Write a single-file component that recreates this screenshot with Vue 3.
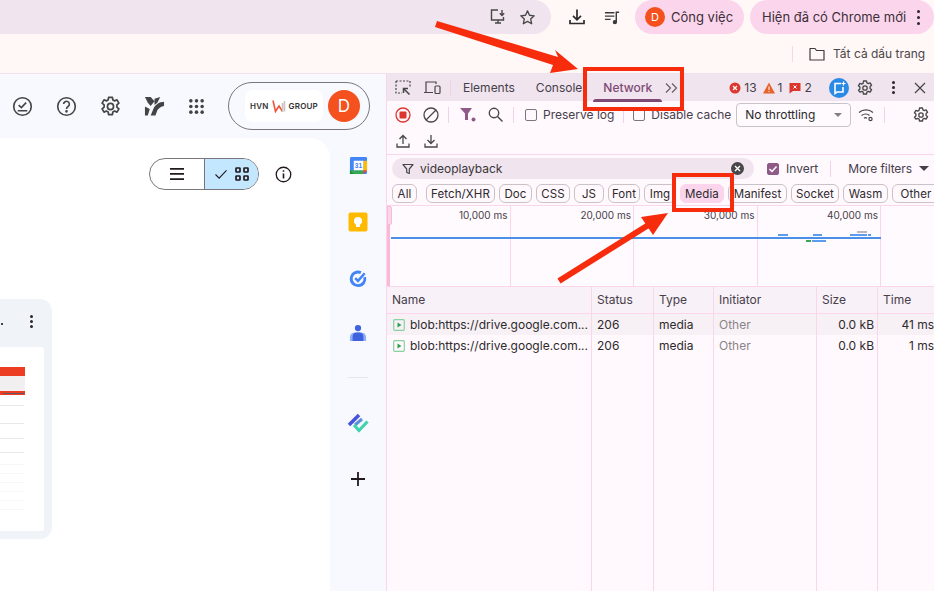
<script setup>
const chips = [
  { label: 'All', w: 25 },
  { label: 'Fetch/XHR', w: 69 },
  { label: 'Doc', w: 33 },
  { label: 'CSS', w: 34 },
  { label: 'JS', w: 30 },
  { label: 'Font', w: 32 },
  { label: 'Img', w: 32 },
  { label: 'Media', w: 44, active: true },
  { label: 'Manifest', w: 59 },
  { label: 'Socket', w: 48 },
  { label: 'Wasm', w: 45 },
  { label: 'Other', w: 48 }
];

const ticks = ['10,000 ms', '20,000 ms', '30,000 ms', '40,000 ms'];

const bars = [
  { x: 778, y: 234, w: 10, c: '#5b9bf0' },
  { x: 813, y: 234, w: 9, c: '#5b9bf0' },
  { x: 850, y: 234, w: 8, c: '#5b9bf0' },
  { x: 858, y: 234, w: 9, c: '#5b9bf0' },
  { x: 868, y: 234, w: 3, c: '#5b9bf0' },
  { x: 857, y: 231, w: 10, c: '#bdb6bd' },
  { x: 806, y: 240, w: 5, c: '#3aa457' },
  { x: 812, y: 240, w: 5, c: '#5b9bf0' },
  { x: 817, y: 240, w: 9, c: '#5b9bf0' }
];

const rows = [
  { time: '41 ms', stripe: true },
  { time: '1 ms', stripe: false }
];
</script>

<template>
  <div class="page">
    <div class="topbar">
      <div class="omnibox">
        <svg class="ico install" viewBox="0 0 18 18" width="18" height="18" fill="none" stroke="#474747" stroke-width="1.4">
          <path d="M9 2H2.500v10h12V9" />
          <path d="M6 15h6M9 12v3" />
          <path d="M13 2v5M10.800 5.200 13 7.400l2.200-2.200" />
        </svg>
        <svg class="ico" viewBox="0 0 18 18" width="17" height="17" fill="none" stroke="#474747" stroke-width="1.4">
          <path d="m9 2 2.100 4.600 5 .6-3.700 3.400 1 5L9 13.100l-4.400 2.500 1-5L1.900 7.200l5-.6z" stroke-linejoin="round" />
        </svg>
      </div>
      <svg class="ico download" viewBox="0 0 18 18" width="18" height="18" fill="none" stroke="#2b2b2b" stroke-width="1.7">
        <path d="M9 1.500v10M5 7.800l4 4 4-4M2 12v3.500h14V12" />
      </svg>
      <svg class="ico media" viewBox="0 0 18 18" width="17" height="17" fill="none" stroke="#3a3a3a" stroke-width="1.5">
        <path d="M1 4h10M1 7.500h10M1 11h6" />
        <path d="M13 14V3.500h3" />
        <circle cx="11.500" cy="14" r="1.500" fill="#3a3a3a" />
      </svg>
      <div class="pill work">
        <span class="mini-avatar">D</span>
        <span>Công việc</span>
      </div>
      <div class="pill update">
        <span>Hiện đã có Chrome mới</span>
        <i class="dots"><b></b><b></b><b></b></i>
      </div>
    </div>

    <div class="bookmarks">
      <span class="bm-sep"></span>
      <svg viewBox="0 0 16 14" width="16" height="14" fill="none" stroke="#3d3d3d" stroke-width="1.2">
        <path d="M1 1.500h5l1.500 2H15v9.500H1z" stroke-linejoin="round" />
      </svg>
      <span>Tất cả dấu trang</span>
    </div>

    <div class="main">
      <div class="app">
        <div class="app-head">
          <svg class="hico" viewBox="0 0 22 22" width="21" height="21" fill="none" stroke="#444" stroke-width="1.700">
            <circle cx="11" cy="11" r="9.200" />
            <path d="m7 9.500 2.800 2.600 5-5.200M6 15.500h10" />
          </svg>
          <svg class="hico" viewBox="0 0 22 22" width="21" height="21" fill="none" stroke="#444" stroke-width="1.700">
            <circle cx="11" cy="11" r="9.200" />
            <path d="M8 8.500a3 3 0 1 1 4.700 2.500c-1 .7-1.700 1.200-1.700 2.500" />
            <circle cx="11" cy="16" r=".6" fill="#444" />
          </svg>
          <svg class="hico" viewBox="0 0 22 22" width="21" height="21" fill="none" stroke="#444" stroke-width="1.800">
            <path d="m9 1.500h4l.5 2.700 1.800.9 2.500-1.100 2 3.400-2.100 1.800v2.500l2.100 1.800-2 3.400-2.500-1.100-1.800.9-.5 2.700H9l-.5-2.700-1.800-.9-2.500 1.100-2-3.400 2.100-1.800V9.200L2.200 7.400l2-3.400 2.500 1.100 1.800-.9z" stroke-linejoin="round" />
            <circle cx="11" cy="11" r="3.200" />
          </svg>
          <svg class="hico" viewBox="0 0 22 22" width="21" height="21" fill="#444">
            <path d="M1 1h6l4 4.500-4 5L4 7zM11 3l6-2-3 6-3 2.500zM21 6c-5 0-9 3-11 7l-3 7.500h5l2-5.500c1.500-2.500 4-4 7-4.500zM1 11l5 2.500-2 7H1z" />
          </svg>
          <svg class="hico" viewBox="0 0 18 18" width="17" height="17" fill="#444">
            <circle cx="3" cy="3" r="1.900" /><circle cx="9" cy="3" r="1.900" /><circle cx="15" cy="3" r="1.900" />
            <circle cx="3" cy="9" r="1.900" /><circle cx="9" cy="9" r="1.900" /><circle cx="15" cy="9" r="1.900" />
            <circle cx="3" cy="15" r="1.900" /><circle cx="9" cy="15" r="1.900" /><circle cx="15" cy="15" r="1.900" />
          </svg>
          <div class="account">
            <div class="org">
              <span>HVN</span>
              <svg viewBox="0 0 14 14" width="14" height="14" fill="none" stroke-width="1.600">
                <path d="M1 1.500 3.500 12.500 7 7l3.500 5.500" stroke="#f0523a" />
                <path d="M10.500 12.500V4M12.500 12.500V2" stroke="#c9c3c3" />
              </svg>
              <span>GROUP</span>
            </div>
            <span class="avatar">D</span>
          </div>
        </div>

        <div class="app-body">
          <div class="sheet">
            <div class="sheet-tools">
              <div class="toggle">
                <div class="seg">
                  <svg viewBox="0 0 14 12" width="14" height="12" fill="#22191f"><path d="M0 0h14v1.700H0zM0 5.100h14v1.700H0zM0 10.200h14v1.700H0z" /></svg>
                </div>
                <div class="seg on">
                  <svg viewBox="0 0 14 12" width="14" height="11" fill="none" stroke="#22191f" stroke-width="1.200"><path d="m1 6 4 4 8-8.500" /></svg>
                  <svg viewBox="0 0 14 14" width="14" height="14" fill="none" stroke="#22191f" stroke-width="1.700">
                    <rect x="1" y="1" width="4" height="4" rx=".6" /><rect x="9" y="1" width="4" height="4" rx=".6" />
                    <rect x="1" y="9" width="4" height="4" rx=".6" /><rect x="9" y="9" width="4" height="4" rx=".6" />
                  </svg>
                </div>
              </div>
              <svg viewBox="0 0 18 18" width="17" height="17" fill="none" stroke="#22191f" stroke-width="1.400">
                <circle cx="9" cy="9" r="7.700" />
                <path d="M9 8v5.200M9 4.500v1.700" stroke-width="1.700" />
              </svg>
            </div>

            <div class="file-card">
              <div class="file-head">
                <i class="stop"></i>
                <i class="dots small"><b></b><b></b><b></b></i>
              </div>
              <svg class="thumb" viewBox="0 0 44 184" width="44" height="184">
                <rect width="44" height="184" fill="#fff" />
                <rect x="0" y="20" width="25" height="9" fill="#ec3c22" />
                <rect x="0" y="29" width="25" height="15" fill="#f1eff0" />
                <rect x="0" y="44" width="25" height="4" fill="#ec3c22" />
                <rect x="3" y="46" width="21" height="1" fill="#6b5360" />
                <rect x="0" y="58" width="24" height="1" fill="#ebe8e9" />
                <rect x="0" y="76" width="24" height="1" fill="#ebe8e9" />
                <rect x="0" y="91" width="24" height="1" fill="#ebe8e9" />
                <rect x="0" y="105" width="24" height="1" fill="#ebe8e9" />
                <rect x="0" y="117" width="24" height="1" fill="#f8f6f7" />
                <rect x="0" y="126" width="24" height="1" fill="#f8f6f7" />
                <rect x="0" y="135" width="24" height="1" fill="#f8f6f7" />
                <rect x="0" y="144" width="24" height="1" fill="#f8f6f7" />
                <rect x="0" y="153" width="24" height="1" fill="#f8f6f7" />
                <rect x="0" y="162" width="24" height="1" fill="#f8f6f7" />
              </svg>
            </div>
          </div>

          <div class="rail">
            <svg viewBox="0 0 20 20" width="19" height="19">
              <rect x="1" y="1" width="18" height="18" rx="1.500" fill="#4285f4" />
              <rect x="1" y="15" width="14" height="4" fill="#34a853" />
              <rect x="15" y="5" width="4" height="11" fill="#fbbc04" />
              <path d="M1 15v4h4z" fill="#1e8e3e" />
              <path d="M15 19l4-4h-4z" fill="#ea4335" />
              <rect x="5" y="5" width="10" height="10" fill="#fff" />
              <text x="10" y="13" class="cal">31</text>
            </svg>
            <svg viewBox="0 0 20 20" width="20" height="20">
              <rect x="0.500" y=".5" width="19" height="19" rx="2" fill="#ffba00" />
              <circle cx="10" cy="9" r="4" fill="#fff" />
              <rect x="8" y="12.500" width="4" height="2.500" fill="#fff" />
            </svg>
            <svg viewBox="0 0 20 20" width="19" height="19" fill="none" stroke="#4285f4" stroke-width="3">
              <path d="M16.500 8.500a7.200 7.200 0 1 1-4-4.700" />
              <path d="m6.500 9.500 3 3 7-8" stroke-width="2.600" />
            </svg>
            <svg viewBox="0 0 20 20" width="18" height="18">
              <path d="M1 19v-4.500A5.500 5.500 0 0 1 6 9.500h8a5.500 5.500 0 0 1 5 5V19z" fill="#8fb0f2" />
              <circle cx="10" cy="4.500" r="3.500" fill="#3f62e0" />
              <path d="M4 19v-5A4.500 4.500 0 0 1 8 9.500h4a4.500 4.500 0 0 1 4 4.500v5z" fill="#3f62e0" />
            </svg>
            <span class="rail-sep"></span>
            <svg viewBox="0 0 22 20" width="22" height="20" fill="none">
              <path d="M2 12 12 2" stroke="#4654dd" stroke-width="3.500" />
              <path d="M8 12 15 6" stroke="#5a90d8" stroke-width="3" />
              <path d="m7 12 5 5.500 8.500-9" stroke="#3fd3ae" stroke-width="3.200" />
            </svg>
            <svg class="plus" viewBox="0 0 14 14" width="14" height="14" fill="none" stroke="#22191f" stroke-width="1.800">
              <path d="M7 0v14M0 7h14" />
            </svg>
          </div>
        </div>
      </div>

      <div class="devtools">
        <div class="tabs">
          <svg class="tool first" viewBox="0 0 16 16" width="16" height="16" fill="none" stroke="#474747" stroke-width="1.200">
            <path d="M1 1h14v6M1 1v12h6" stroke-dasharray="2 1.500" />
            <path d="M14.500 14.500 8.500 8.500M8.500 13V8.500H13" stroke-width="1.500" />
          </svg>
          <svg class="tool second" viewBox="0 0 18 16" width="18" height="16" fill="none" stroke="#474747" stroke-width="1.200">
            <path d="M1 12.500h9M3 12V2h10v2" />
            <rect x="12" y="6" width="5" height="7.500" rx="1" />
          </svg>
          <span class="v-sep"></span>
          <span class="tab elements">Elements</span>
          <span class="tab console">Console</span>
          <span class="tab active">Network</span>
          <svg class="more" viewBox="0 0 13 10" width="13" height="10" fill="none" stroke="#5f5a60" stroke-width="1.100">
            <path d="m1 .5 4.500 4.500L1 9.500M7 .5 11.500 5 7 9.500" />
          </svg>
          <div class="status">
            <svg viewBox="0 0 12 12" width="12" height="12"><circle cx="6" cy="6" r="5.500" fill="#dc362e" /><path d="m4 4 4 4M8 4 4 8" stroke="#fff" stroke-width="1.200" /></svg>
            <span>13</span>
            <svg class="s-gap" viewBox="0 0 12 12" width="12" height="12"><path d="M6 .5 12 11.500H0z" fill="#e8622c" /><path d="M6 4.500V8M6 9v1" stroke="#fff" stroke-width="1" /></svg>
            <span>1</span>
            <svg class="s-gap2" viewBox="0 0 12 12" width="12" height="12"><path d="M.5 1h11v8H4l-3.500 2.500z" fill="#dc362e" /><path d="m4.500 3.500 3 3M7.500 3.500l-3 3" stroke="#fff" stroke-width="1" /></svg>
            <span>2</span>
          </div>
          <span class="ai">
            <svg viewBox="0 0 20 20" width="20" height="20"><circle cx="10" cy="10" r="10" fill="#2b8ae6" /><path d="M12 5.500H6v10l2-1.500h6v-5" fill="none" stroke="#fff" stroke-width="1.600" /><path d="M14.500 3.500v4M12.500 5.500h4" stroke="#fff" stroke-width="1.200" /></svg>
          </span>
          <svg class="gear g1" viewBox="0 0 16 16" width="16" height="16" fill="none" stroke="#474747" stroke-width="1.300">
            <path d="M6.500 1h3l.4 1.900 1.400.7 1.800-.8 1.500 2.500-1.500 1.300v1.800l1.500 1.300-1.500 2.500-1.800-.8-1.400.7-.4 1.900h-3l-.4-1.900-1.400-.7-1.800.8L1.400 10.200l1.500-1.300V7.100L1.400 5.800l1.500-2.500 1.800.8 1.400-.7z" stroke-linejoin="round" />
            <circle cx="8" cy="8" r="2.200" />
          </svg>
          <i class="dots small kebab"><b></b><b></b><b></b></i>
          <svg class="close" viewBox="0 0 12 12" width="12" height="12" fill="none" stroke="#474747" stroke-width="1.300">
            <path d="m1 1 10 10M11 1 1 11" />
          </svg>
        </div>

        <div class="bar">
          <svg class="tool first" viewBox="0 0 16 16" width="16" height="16" fill="none">
            <circle cx="8" cy="8" r="7" stroke="#dc362e" stroke-width="1.300" />
            <rect x="4.500" y="4.500" width="7" height="7" rx="1" fill="#dc362e" />
          </svg>
          <svg class="tool second" viewBox="0 0 16 16" width="16" height="16" fill="none" stroke="#474747" stroke-width="1.300">
            <circle cx="8" cy="8" r="7" />
            <path d="m3 13 10-10" />
          </svg>
          <span class="v-sep"></span>
          <svg class="funnel" viewBox="0 0 16 14" width="16" height="14" fill="#8f5a87">
            <path d="M0 0h12L8 5.500V12H5V5.500z" />
            <circle cx="13.500" cy="11.500" r="2" />
          </svg>
          <svg class="glass" viewBox="0 0 15 15" width="15" height="15" fill="none" stroke="#474747" stroke-width="1.400">
            <circle cx="6" cy="6" r="4.700" />
            <path d="m9.500 9.500 5 5" />
          </svg>
          <span class="v-sep s2"></span>
          <label class="check c1"><i class="box"></i>Preserve log</label>
          <span class="v-sep s3"></span>
          <label class="check c2"><i class="box"></i>Disable cache</label>
          <div class="select">
            <span>No throttling</span>
            <i class="caret"></i>
          </div>
          <svg class="wifi" viewBox="0 0 16 14" width="16" height="14" fill="none" stroke="#474747" stroke-width="1.200">
            <path d="M1 4.500c4-3.500 10-3.500 14 0M3.500 7.500c2.500-2 6-2 8 0M6 10.200c1-.8 2-.8 3 0" />
            <circle cx="12.500" cy="11" r="1.600" />
          </svg>
          <span class="v-sep s4"></span>
          <svg class="gear g2" viewBox="0 0 16 16" width="16" height="16" fill="none" stroke="#474747" stroke-width="1.300">
            <path d="M6.500 1h3l.4 1.900 1.400.7 1.800-.8 1.500 2.500-1.500 1.300v1.800l1.500 1.300-1.500 2.500-1.800-.8-1.400.7-.4 1.900h-3l-.4-1.900-1.400-.7-1.800.8L1.400 10.200l1.500-1.300V7.100L1.400 5.800l1.500-2.500 1.800.8 1.400-.7z" stroke-linejoin="round" />
            <circle cx="8" cy="8" r="2.200" />
          </svg>
        </div>

        <div class="bar second-bar">
          <svg class="tool first" viewBox="0 0 14 14" width="14" height="14" fill="none" stroke="#474747" stroke-width="1.300">
            <path d="M7 10V1.500M3.500 5 7 1.500 10.500 5M1 9.500v3.500h12V9.500" />
          </svg>
          <svg class="tool second" viewBox="0 0 14 14" width="14" height="14" fill="none" stroke="#474747" stroke-width="1.300">
            <path d="M7 1v8.500M3.500 6 7 9.500 10.500 6M1 9.500v3.500h12V9.500" />
          </svg>
        </div>

        <div class="filter-row">
          <div class="search">
            <svg viewBox="0 0 12 12" width="12" height="12" fill="none" stroke="#474747" stroke-width="1.200">
              <path d="M1 1.500h10L7.300 6v4.500L4.700 9.500V6z" stroke-linejoin="round" />
            </svg>
            <span>videoplayback</span>
            <svg class="clear" viewBox="0 0 13 13" width="13" height="13">
              <circle cx="6.500" cy="6.500" r="6.500" fill="#474747" />
              <path d="m4 4 5 5M9 4 4 9" stroke="#fff" stroke-width="1.400" />
            </svg>
          </div>
          <label class="check invert">
            <i class="box on">
              <svg viewBox="0 0 12 12" width="12" height="12" fill="none" stroke="#fff" stroke-width="1.500"><path d="m2.500 6 2.500 2.500 4.500-5" /></svg>
            </i>
            Invert
          </label>
          <span class="v-sep s5"></span>
          <span class="more-filters">More filters</span>
          <i class="caret dark"></i>
        </div>

        <div class="chips">
          <template v-for="(chip, i) in chips" :key="chip.label">
            <span class="chip" :class="{ active: chip.active, first: i === 0 }" :style="{ width: chip.w + 'px' }">{{ chip.label }}</span>
          </template>
        </div>

        <div class="overview">
          <div class="handle"></div>
          <div v-for="t in ticks" :key="t" class="tick">{{ t }}</div>
          <div class="timeline"></div>
          <i
            v-for="(b, i) in bars"
            :key="i"
            class="bar-mark"
            :style="{ left: b.x - 387 + 'px', top: b.y - 206 + 'px', width: b.w + 'px', background: b.c }"
          ></i>
        </div>

        <div class="table">
          <div class="cell head">Name</div>
          <div class="cell head">Status</div>
          <div class="cell head">Type</div>
          <div class="cell head">Initiator</div>
          <div class="cell head">Size</div>
          <div class="cell head">Time</div>
          <template v-for="row in rows" :key="row.time">
            <div class="cell name" :class="{ stripe: row.stripe }">
              <svg viewBox="0 0 12 12" width="12" height="12" fill="none">
                <rect x=".7" y=".7" width="10.600" height="10.600" rx="1" stroke="#86d3a0" stroke-width="1.200" />
                <path d="M4.500 3.500 8.500 6l-4 2.500z" fill="#2ca14e" />
              </svg>
              <span>blob:https://drive.google.com...</span>
            </div>
            <div class="cell" :class="{ stripe: row.stripe }">206</div>
            <div class="cell" :class="{ stripe: row.stripe }">media</div>
            <div class="cell muted" :class="{ stripe: row.stripe }">Other</div>
            <div class="cell num" :class="{ stripe: row.stripe }">0.0 kB</div>
            <div class="cell num time" :class="{ stripe: row.stripe }">{{ row.time }}</div>
          </template>
          <div v-for="n in 6" :key="n" class="cell filler"></div>
        </div>
      </div>
    </div>

    <svg class="notes" viewBox="0 0 934 591" width="934" height="591">
      <path d="M437 21 558 57 555 50 578 69 550 73 553 65 435 27z" fill="#f62c0c" />
      <path d="M559 281 650 224" stroke="#f62c0c" stroke-width="6" />
      <path d="M668 213 641 217 653 235z" fill="#f62c0c" />
    </svg>
    <div class="mark mark-net"></div>
    <div class="mark mark-media"></div>
  </div>
</template>

<style>
html,
body {
  margin: 0;
  overflow: hidden;
}
</style>

<style scoped>
.page {
  position: relative;
  width: 934px;
  height: 591px;
  overflow: hidden;
  display: flex;
  flex-direction: column;
  background: #fff8f7;
  color: #3a3639;
  font-family: Inter, "Liberation Sans", sans-serif;
  font-size: 12px;
}
svg {
  display: block;
  flex: none;
}
.topbar {
  height: 34px;
  display: flex;
  align-items: center;
  flex: none;
}
.omnibox {
  width: 551px;
  height: 34px;
  box-sizing: border-box;
  padding-right: 15px;
  display: flex;
  align-items: center;
  justify-content: flex-end;
  gap: 12px;
  background: #f0e4ee;
  border-radius: 0 17px 17px 0;
}
.download {
  margin-left: 17px;
}
.media {
  margin-left: 18px;
}
.pill {
  height: 34px;
  display: flex;
  align-items: center;
  border-radius: 17px;
  background: #fbd5ec;
  font-size: 13px;
  color: #3d2f39;
  box-sizing: border-box;
}
.work {
  width: 109px;
  margin-left: 14px;
  padding-left: 10px;
  gap: 6px;
}
.mini-avatar {
  width: 20px;
  height: 20px;
  border-radius: 50%;
  background: #f4511e;
  color: #fff;
  font-size: 11px;
  display: flex;
  align-items: center;
  justify-content: center;
}
.update {
  width: 184px;
  margin-left: 6px;
  padding-left: 12px;
}
.dots {
  display: flex;
  flex-direction: column;
  gap: 3px;
  margin-left: 11px;
}
.dots b {
  width: 3px;
  height: 3px;
  border-radius: 50%;
  background: #2c252a;
}
.bookmarks {
  height: 40px;
  box-sizing: border-box;
  flex: none;
  display: flex;
  align-items: center;
  padding-left: 792px;
  gap: 8px;
  font-size: 12px;
  color: #4a4548;
  border-bottom: 1px solid #f0e2ea;
}
.bm-sep {
  width: 1px;
  height: 16px;
  background: #fbd5ec;
  margin-right: 8px;
}
.main {
  flex: 1;
  display: flex;
  min-height: 0;
}
.app {
  width: 386px;
  flex: none;
  display: flex;
  flex-direction: column;
  background: #f8f9ff;
}
.app-head {
  height: 64px;
  flex: none;
  display: flex;
  align-items: center;
  padding-left: 12px;
  gap: 23px;
}
.account {
  width: 142px;
  height: 48px;
  box-sizing: border-box;
  border: 1px solid #7a757a;
  border-radius: 24px;
  display: flex;
  align-items: center;
  padding-left: 16px;
  gap: 5px;
}
.org {
  width: 78px;
  height: 32px;
  background: #fff;
  border-radius: 8px;
  display: flex;
  align-items: center;
  justify-content: center;
  gap: 3px;
  font-size: 8px;
  font-weight: 600;
  color: #333;
  letter-spacing: 0.2px;
}
.avatar {
  width: 32px;
  height: 32px;
  border-radius: 50%;
  background: #f4511e;
  color: #fff;
  font-size: 17px;
  display: flex;
  align-items: center;
  justify-content: center;
}
.app-body {
  flex: 1;
  display: flex;
  min-height: 0;
}
.sheet {
  width: 330px;
  flex: none;
  background: #fff;
  border-radius: 0 20px 0 0;
}
.sheet-tools {
  height: 161px;
  box-sizing: border-box;
  padding: 20px 0 0 149px;
  display: flex;
  align-items: flex-start;
  gap: 16px;
}
.sheet-tools > svg {
  margin-top: 8px;
}
.toggle {
  width: 110px;
  height: 32px;
  box-sizing: border-box;
  border: 1px solid #7a757a;
  border-radius: 16px;
  display: flex;
  overflow: hidden;
}
.seg {
  width: 54px;
  display: flex;
  align-items: center;
  justify-content: center;
}
.seg.on {
  flex: 1;
  border-left: 1px solid #7a757a;
  background: #c2e7ff;
  gap: 7px;
}
.file-card {
  width: 52px;
  height: 240px;
  box-sizing: border-box;
  background: #f0f4f9;
  border-radius: 0 12px 12px 0;
  padding-right: 8px;
}
.file-head {
  height: 48px;
  display: flex;
  align-items: center;
  padding-bottom: 4px;
  box-sizing: border-box;
}
.stop {
  width: 2px;
  height: 2px;
  margin: 5px 0 0 1px;
  background: #444;
}
.dots.small {
  gap: 2px;
  margin-left: 27px;
}
.thumb {
  border-radius: 0 3px 3px 0;
}
.rail {
  flex: 1;
  display: flex;
  flex-direction: column;
  align-items: center;
  padding-top: 18px;
}
.rail > svg:nth-child(2) {
  margin-top: 37px;
}
.rail > svg:nth-child(3) {
  margin-top: 37px;
}
.rail > svg:nth-child(4) {
  margin-top: 36px;
}
.rail-sep {
  width: 20px;
  height: 1px;
  margin-top: 35px;
  background: #e7e6ea;
}
.rail > svg:nth-child(6) {
  margin-top: 35px;
}
.plus {
  margin-top: 39px;
}
.cal {
  font-family: "Liberation Sans", sans-serif;
  font-size: 7px;
  font-weight: 700;
  fill: #4285f4;
  text-anchor: middle;
}
.devtools {
  flex: 1;
  min-width: 0;
  display: flex;
  flex-direction: column;
  border-left: 1px solid #fbd5ec;
  background: #fff8fd;
}
.tabs {
  height: 27px;
  flex: none;
  display: flex;
  align-items: center;
  position: relative;
  background: #f0e4ee;
}
.tool.first {
  margin-left: 8px;
}
.tool.second {
  margin-left: 12px;
}
.v-sep {
  width: 1px;
  height: 16px;
  margin-left: 9px;
  background: #f0d4e6;
  flex: none;
}
.tab {
  color: #46404a;
}
.elements {
  margin-left: 12px;
}
.console {
  margin-left: 21px;
}
.tab.active {
  margin-left: 21px;
  color: #7d4a75;
  font-weight: 500;
  position: relative;
}
.tab.active::after {
  content: "";
  position: absolute;
  left: -10px;
  right: -10px;
  bottom: -7px;
  height: 3px;
  border-radius: 3px 3px 0 0;
  background: #7d4a75;
}
.more {
  margin-left: 13px;
}
.status {
  margin-left: 51px;
  display: flex;
  align-items: center;
  gap: 3px;
  color: #46404a;
}
.s-gap {
  margin-left: 3px;
}
.s-gap2 {
  margin-left: 4px;
}
.ai {
  margin-left: 17px;
}
.g1 {
  margin-left: 8px;
}
.dots.kebab {
  margin-left: 19px;
}
.close {
  margin-left: 19px;
}
.bar {
  height: 27px;
  flex: none;
  display: flex;
  align-items: center;
  white-space: nowrap;
}
.second-bar {
  height: 26px;
}
.second-bar .tool.first {
  margin-left: 9px;
}
.second-bar .tool.second {
  margin-left: 14px;
}
.funnel {
  margin-left: 11px;
}
.glass {
  margin-left: 12px;
}
.s2 {
  margin-left: 10px;
}
.check {
  display: flex;
  align-items: center;
  gap: 6px;
  color: #46404a;
  white-space: nowrap;
}
.box {
  width: 12px;
  height: 12px;
  box-sizing: border-box;
  border: 1px solid #7c767a;
  border-radius: 2px;
  flex: none;
}
.box.on {
  display: flex;
  align-items: center;
  justify-content: center;
  background: #8f5a87;
  border-color: #8f5a87;
}
.c1 {
  margin-left: 11px;
}
.s3 {
  margin-left: 9px;
}
.c2 {
  margin-left: 9px;
}
.select {
  width: 115px;
  height: 24px;
  box-sizing: border-box;
  margin-left: 5px;
  padding: 0 8px;
  border: 1px solid #c9c3c8;
  border-radius: 4px;
  display: flex;
  align-items: center;
  justify-content: space-between;
  background: #fffafd;
  color: #2d2a2c;
}
.caret {
  width: 0;
  height: 0;
  border: 4px solid transparent;
  border-top: 4px solid #857f84;
  border-bottom: 0;
}
.caret.dark {
  border-width: 5px;
  border-bottom: 0;
  border-top-color: #46404a;
  margin-left: 7px;
}
.wifi {
  margin-left: 7px;
}
.s4 {
  margin-left: 10px;
}
.g2 {
  margin-left: 28px;
}
.filter-row {
  height: 28px;
  flex: none;
  box-sizing: border-box;
  border-top: 1px solid #fbd5ec;
  display: flex;
  align-items: center;
}
.search {
  width: 362px;
  height: 21px;
  box-sizing: border-box;
  margin-left: 5px;
  padding: 0 10px;
  display: flex;
  align-items: center;
  gap: 6px;
  border-radius: 11px;
  background: #f0e4ee;
  color: #3a3639;
}
.clear {
  margin-left: auto;
}
.invert {
  margin-left: 13px;
  gap: 7px;
}
.s5 {
  margin-left: 12px;
}
.more-filters {
  margin-left: 17px;
  color: #46404a;
  letter-spacing: -0.1px;
}
.chips {
  height: 24px;
  flex: none;
  box-sizing: border-box;
  border-bottom: 1px solid #fbd5ec;
  padding-left: 5px;
  display: flex;
  align-items: center;
  gap: 4px;
  width: 547px;
  overflow: hidden;
}
.chip {
  flex: none;
  box-sizing: border-box;
  height: 19px;
  border: 1px solid #c9c3c8;
  border-radius: 6px;
  display: flex;
  align-items: center;
  justify-content: center;
  color: #2d2a2c;
  font-size: 11.500px;
  letter-spacing: 0.1px;
}
.chip.first {
  margin-right: 5px;
}
.chip.active {
  border-color: #fbd5ec;
  background: #fbd5ec;
}
.overview {
  height: 81px;
  flex: none;
  position: relative;
  display: flex;
  box-sizing: border-box;
  border-bottom: 1px solid #fbd5ec;
  background: #fffafd;
}
.handle {
  position: absolute;
  left: 0;
  top: 0;
  bottom: 0;
  width: 3px;
  background: #fbb8d8;
}
.handle::after {
  content: "";
  position: absolute;
  left: 0;
  top: 0;
  width: 5px;
  height: 19px;
  box-sizing: border-box;
  border-radius: 0 2px 2px 0;
  border: 1px solid #f6bcd9;
  background: #fbd5ec;
}
.tick {
  width: 123.500px;
  box-sizing: border-box;
  padding: 3px 2px 0 0;
  text-align: right;
  font-size: 10px;
  color: #46404a;
  border-right: 1px solid #fbd5ec;
}
.timeline {
  position: absolute;
  left: 4px;
  top: 31px;
  width: 490px;
  height: 2px;
  background: #4a90e8;
}
.bar-mark {
  position: absolute;
  height: 2px;
}
.table {
  flex: 1;
  min-height: 0;
  display: grid;
  grid-template-columns: 205px 62px 60px 103px 61px 56px;
  grid-template-rows: 27px 21px 21px 1fr;
}
.cell {
  box-sizing: border-box;
  padding: 0 5px;
  display: flex;
  align-items: center;
  border-right: 1px solid #fbd5ec;
  color: #2d2a2c;
  white-space: nowrap;
  overflow: hidden;
}
.cell:nth-child(6n) {
  border-right: 0;
}
.cell.head {
  padding-bottom: 2px;
  background: #f8f1f8;
  border-bottom: 1px solid #fbd5ec;
  color: #46404a;
}
.cell.name {
  gap: 5px;
  padding-left: 6px;
}
.cell.stripe {
  background: #f7f0f5;
}
.cell.muted {
  color: #8a8488;
}
.cell.num {
  justify-content: flex-end;
  padding-right: 3px;
}
.cell.time {
  padding-right: 0;
}
.notes {
  position: absolute;
  left: 0;
  top: 0;
  pointer-events: none;
}
.mark {
  position: absolute;
  box-sizing: border-box;
  border: 4px solid #f62c0c;
}
.mark-net {
  left: 583px;
  top: 67px;
  width: 101px;
  height: 44px;
}
.mark-media {
  left: 672px;
  top: 173px;
  width: 62px;
  height: 39px;
}
</style>
